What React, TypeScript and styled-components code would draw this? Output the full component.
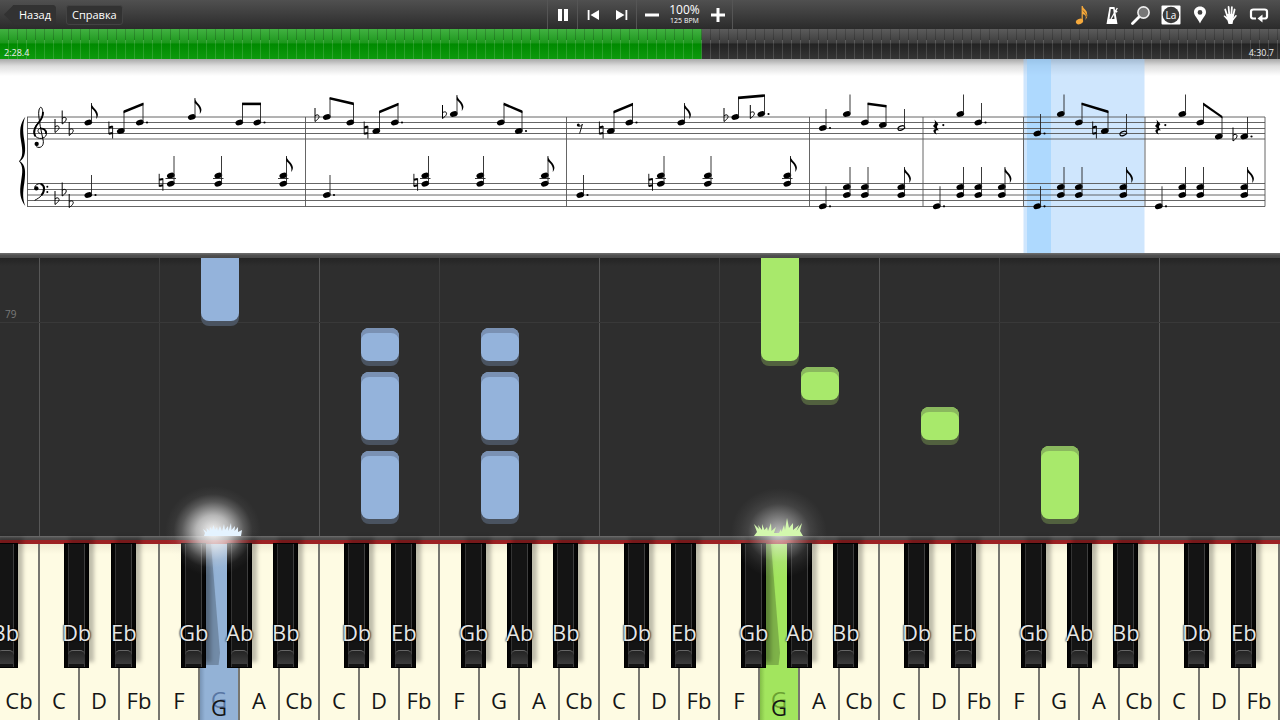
import React, { useState } from 'react';
import styled, { createGlobalStyle, css } from 'styled-components';

const GlobalStyle = createGlobalStyle`
  * { box-sizing: border-box; }
  body { margin: 0; background: #2e2e2e; font-family: 'Open Sans', 'Noto Sans', sans-serif; }
  button { font: inherit; color: inherit; padding: 0; border: 0; background: none; cursor: pointer; }
`;

const Page = styled.div`
  display: flex;
  flex-direction: column;
  min-height: 100vh;
  overflow: hidden;
`;

/* ---------- toolbar ---------- */

const Toolbar = styled.header`
  display: grid;
  grid-template-columns: 1fr auto 1fr;
  height: 29px;
  color: #fff;
  background: linear-gradient(#505050, #2b2b2b);
`;

const MenuGroup = styled.nav`
  display: flex;
  align-items: center;
  gap: 10px;
  padding: 0 4px;
`;

const MenuButton = styled.button<{ $back?: boolean }>`
  height: 20px;
  padding: 0 5px;
  font-size: 11px;
  font-weight: 500;
  line-height: 17px;
  border: 1px solid #434343;
  border-radius: 3px;
  background: #323232;
  ${(p) =>
    p.$back &&
    css`
      padding: 0 4px 0 14px;
      border-color: #323232;
      clip-path: polygon(0 50%, 10px 0, 100% 0, 100% 100%, 10px 100%);
    `}
`;

const Transport = styled.div`
  display: flex;
`;

const TransportSection = styled.div`
  display: flex;
  border-left: 1px solid #555;
  &:last-child { border-right: 1px solid #555; }
`;

const TransportButton = styled.button`
  display: grid;
  place-items: center;
  width: 29px;
  height: 29px;
`;

const Tempo = styled.output`
  display: flex;
  flex-direction: column;
  align-items: center;
  width: 37px;
  padding-top: 3px;
  font-size: 12px;
  line-height: 14px;
  white-space: nowrap;
  small { font-size: 7px; line-height: 8px; }
`;

const ToolGroup = styled.div`
  display: flex;
  justify-content: space-between;
  justify-self: end;
  width: 210px;
  padding-right: 9px;
`;

const ToolButton = styled.button`
  display: grid;
  place-items: center;
  width: 24px;
  height: 29px;
`;

/* ---------- song position ---------- */

const Position = styled.div`
  position: relative;
  height: 30px;
`;

const Seek = styled.input`
  appearance: none;
  display: block;
  width: 100%;
  height: 30px;
  margin: 0;
  background:
    repeating-linear-gradient(90deg, transparent 0 8px, #00000030 8px 9px) 0 0 / 100% 11px no-repeat,
    repeating-linear-gradient(90deg, transparent 0 8px, #ffffff24 8px 9px) 0 11px / 100% 19px no-repeat,
    linear-gradient(#42b142, #1d981d 46%, #008a00 50%, #0d9a0d) 0 0 / var(--played) 100% no-repeat,
    linear-gradient(#5c5c5c, #3d3d3d 46%, #232323 50%, #353535);
  &::-webkit-slider-thumb { appearance: none; width: 1px; height: 30px; }
`;

const Clock = styled.span<{ $end?: boolean }>`
  position: absolute;
  bottom: 0;
  ${(p) => (p.$end ? 'right: 6px;' : 'left: 4px;')}
  font-size: 9px;
  line-height: 13px;
  color: #eee;
  pointer-events: none;
`;

/* ---------- score ---------- */

const Sheet = styled.section`
  background: linear-gradient(#a8a8a8, #dedede 7px, #fff 17px);
  svg { display: block; width: 100%; height: auto; }
`;

const Rail = styled.div<{ $h: number }>`
  height: ${(p) => p.$h}px;
  background: linear-gradient(#707070, #4f4f4f 50%, #484848);
`;

const Staves = [117, 122.5, 128.5, 133.5, 139, 183.5, 189.5, 195, 200.5, 206.5];
const Bars = [27.5, 305.5, 566.5, 809.5, 923, 1023.5, 1145, 1265];

const Head = ({ x, y, open }: { x: number; y: number; open?: boolean }) => (
  <ellipse
    cx={x}
    cy={y}
    rx={open ? 3.5 : 4}
    ry={open ? 2 : 2.7}
    transform={`rotate(-20 ${x} ${y})`}
    fill={open ? 'none' : '#000'}
    stroke={open ? '#000' : 'none'}
    strokeWidth={1.1}
  />
);

type NoteProps = { x: number; ys: number[]; top: number; flag?: boolean; dot?: boolean; open?: boolean; ledger?: boolean };
const Note = ({ x, ys, top, flag, dot, open, ledger }: NoteProps) => (
  <g>
    {ys.map((y) => (
      <Head key={y} x={x + 0.3} y={y} open={open} />
    ))}
    <path d={`M${x + 3.5} ${ys[0] - 0.5}V${top}`} stroke="#222" strokeWidth={0.9} />
    {flag && (
      <path
        transform={`translate(${x + 3.2} ${top})`}
        d="M0 0C.8 4.600 6.600 7 6.700 11.500C6.700 13.200 6.200 14.600 5 16C6 12 4.200 8 0 5Z"
      />
    )}
    {dot && <circle cx={x + 7.5} cy={ys[0]} r={1.1} />}
    {ledger && <path d={`M${x - 5} 178.5h10.5`} stroke="#222" strokeWidth={0.9} />}
  </g>
);

const Beam = ({ x1, y1, x2, y2 }: { x1: number; y1: number; x2: number; y2: number }) => (
  <path d={`M${x1} ${y1}L${x2} ${y2}v2.6L${x1} ${y1 + 2.6}Z`} />
);

const Flat = ({ x, y }: { x: number; y: number }) => (
  <path
    transform={`translate(${x} ${y})`}
    d="M-2-9V4.5M-2-1C0-3.2 3-2 1.8.6C1.2 2 0 3-2 4.5"
    fill="none"
    stroke="#000"
    strokeWidth={1}
  />
);

const Natural = ({ x, y }: { x: number; y: number }) => (
  <g transform={`translate(${x} ${y})`} stroke="#000" fill="none">
    <path d="M-1.8-8.5V4.2M1.900-4V8.5" strokeWidth={0.9} />
    <path d="M-1.8-2.6L1.9-3.4M-1.8 3.8L1.9 3" strokeWidth={2} />
  </g>
);

const QuarterRest = ({ x }: { x: number }) => (
  <g transform={`translate(${x} 127.5)`}>
    <path d="M-1.6-8L2.400-3.2C.4-1 .6.2 3 3C-.2 2-1.2 4 .8 7C-3.8 4.600-3.2 1.4-.2 1.400L-3-1.600C-.6-3.600-.6-5.400-1.600-8Z" />
    <circle cx={7.3} cy={-2.4} r={1.1} />
  </g>
);

/* [x, head y, stem top, flag, dot] */
const trebleNotes: [number, number, number, boolean?, boolean?][] = [
  [88, 122.5, 103, true], [120.5, 131, 111], [139.5, 122.5, 103, false, true], [191.5, 117, 98, true],
  [239, 122.5, 103], [257, 122.5, 103, false, true],
  [326.5, 117, 98], [350, 122.5, 104], [376, 131, 111], [394.5, 122.5, 103, false, true],
  [453.5, 114, 95, true], [500.5, 122.5, 104], [518.5, 131, 111, false, true],
  [610.5, 131, 111], [629, 122.5, 103, false, true], [681, 122.5, 103, true], [735, 117, 97], [761, 114, 95, false, true],
  [822.5, 128, 109, false, true], [846.5, 114, 94.5], [864.5, 122.5, 103], [882.5, 125, 105],
  [960, 114, 94.5], [978, 122.5, 103, false, true],
  [1037, 133.5, 114, false, true], [1060.5, 114, 94.5], [1078.5, 122.5, 103], [1104.5, 131, 111],
  [1182, 114, 94.5], [1200, 122.5, 103], [1218.5, 136.5, 117], [1244, 136.5, 117, false, true],
];
const beams = [
  [123.6, 110.6, 143.4, 102.6], [242.1, 102.6, 261, 102.6], [329.6, 97, 353.9, 102.6], [379.1, 110.8, 398.4, 102.8],
  [503.6, 102.6, 522.4, 110.6], [613.6, 110.8, 633, 102.8], [738, 96.6, 764.9, 94.2], [867.6, 102.4, 886.4, 105],
  [1081.6, 102.4, 1108.4, 110.6], [1203.2, 102.6, 1222.4, 116],
];
const bassRoots = [[88, 195], [326.5, 195], [580, 195], [822.5, 206.3], [936.5, 206.3], [1037, 206.3], [1158.5, 206.3]];
const highChords: [number, boolean?][] = [
  [170.5], [218], [283, true], [425], [480], [544.5, true], [660.5], [707.5], [787, true],
];
const lowChords: [number, boolean?][] = [
  [846.5], [864.5], [901, true], [960], [978], [1001.5, true], [1060.5], [1078.5], [1123, true], [1182], [1200], [1244, true],
];
const flats = [
  [57, 128], [64.2, 119.5], [71.2, 131], [57, 200], [64.2, 191.5], [71.2, 203],
  [317, 117], [444.5, 114], [726, 117], [752.3, 114], [1235, 136.5],
];
const naturals = [
  [110.7, 130], [161, 182.3], [366, 130], [415.7, 182.3], [601.2, 130], [650.6, 182.3], [1094.5, 130],
];

const Score = () => (
  <svg viewBox="0 59 1280 194" role="img" aria-label="Ноты">
    <rect x={1023.5} y={59} width={121} height={194} fill="#9fcdfb" fillOpacity={0.5} />
    <rect x={1027} y={59} width={24} height={194} fill="#8ecbff" fillOpacity={0.5} />
    <g stroke="#555" strokeWidth={0.9}>
      {Staves.map((y) => (
        <path key={y} d={`M27 ${y}H1265`} />
      ))}
      {Bars.map((x) => (
        <path key={x} d={`M${x} 117V206.5`} />
      ))}
    </g>
    <g transform="translate(0 80) scale(.3333)">
      <path d="M76 110C60 130 58 152 63 182C68 212 70 230 57 244C70 258 68 276 63 306C58 336 60 358 76 378C68 358 68 338 73 308C78 272 76 256 60 244C76 232 78 214 73 182C68 150 68 130 76 110Z" />
      <g fill="none" stroke="#000" strokeWidth={3}>
        <path d="M121 161C111 157 112 146 122 145C135 144 142 153 139 164C135 178 113 179 105 167C97 153 106 138 115 128C126 116 131 106 128 92C126 80 120 78 117 90C114 102 118 118 121 140L130 184C131 200 120 206 109 200" />
        <path d="M106 169C98 156 106 139 115 129C123 120 129 110 129 96" strokeWidth={5.5} />
        <path d="M122 146C132 145 139 152 138 162" strokeWidth={5} />
        <path d="M104 361C120 353 133 342 133 325C131 306 108 308 104 322" />
        <path d="M122 312C136 316 134 335 124 346" strokeWidth={6} />
      </g>
      <circle cx={110} cy={192} r={6.5} />
      <circle cx={109} cy={325} r={6.5} />
      <circle cx={142} cy={320} r={3} />
      <circle cx={142} cy={336} r={3} />
    </g>
    {flats.map(([x, y]) => (
      <Flat key={`${x}-${y}`} x={x} y={y} />
    ))}
    {naturals.map(([x, y]) => (
      <Natural key={x} x={x} y={y} />
    ))}
    {trebleNotes.map(([x, y, top, flag, dot]) => (
      <Note key={x} x={x} ys={[y]} top={top} flag={flag} dot={dot} />
    ))}
    {beams.map(([x1, y1, x2, y2]) => (
      <Beam key={x1} x1={x1} y1={y1} x2={x2} y2={y2} />
    ))}
    <Note x={901} ys={[128]} top={109} open />
    <Note x={1123} ys={[133.5]} top={114} open />
    {bassRoots.map(([x, y]) => (
      <Note key={x} x={x} ys={[y]} top={y - 20} dot />
    ))}
    {highChords.map(([x, flag]) => (
      <Note key={x} x={x} ys={[183.7, 175.5]} top={156} flag={flag} ledger />
    ))}
    {lowChords.map(([x, flag]) => (
      <Note key={x} x={x} ys={[195, 187]} top={167} flag={flag} />
    ))}
    <QuarterRest x={936} />
    <QuarterRest x={1158} />
    <circle cx={578.3} cy={125} r={1.5} />
    <path d="M578.5 126.2C580.6 126.4 581.6 125.6 582.4 124.2L579.6 133.6" fill="none" stroke="#000" strokeWidth={0.9} />
  </svg>
);

/* ---------- falling notes ---------- */

const Roll = styled.main`
  position: relative;
  display: grid;
  grid-template-columns: 1fr 3fr 4fr 3fr 4fr 3fr 4fr 3fr 4fr 3fr;
  flex: 1 0 278px;
  overflow: hidden;
  background: linear-gradient(#242424, #2e2e2e 8px);
`;

const Lane = styled.div`
  border-right: 1px solid #3d3d3d;
  &:nth-child(odd) { border-right-color: #575757; }
  &:nth-child(10) { border-right: 0; }
`;

const MeasureLine = styled.div`
  position: absolute;
  top: 50px;
  left: 0;
  right: 0;
  height: 15px;
  padding-left: 5px;
  border-bottom: 1px solid #393939;
  font-size: 10px;
  line-height: 13px;
  color: #7a7a7a;
`;

const tones = {
  blue: { face: '#94b3db', cap: '#7a91b3', foot: '#4a5360', key: '#93b2d6', edge: '#7894b5', ghost: '#5876a3' },
  green: { face: '#a8e96b', cap: '#8ab85e', foot: '#52613f', key: '#a2e55e', edge: '#83bf48', ghost: '#6aa032' },
};
type Tone = keyof typeof tones;

const FallingNote = styled.div<{ $tone: Tone; $key: number; $top: number; $h: number }>`
  position: absolute;
  top: ${(p) => p.$top}px;
  left: calc(100% / 32 * ${(p) => p.$key} + 1px);
  width: calc(100% / 32 - 2px);
  height: ${(p) => p.$h}px;
  border-radius: 8px;
  background: ${(p) => tones[p.$tone].face};
  box-shadow: inset 0 5px 0 ${(p) => tones[p.$tone].cap}, 0 5px 0 ${(p) => tones[p.$tone].foot};
`;

const falling: { tone: Tone; key: number; top: number; h: number }[] = [
  { tone: 'blue', key: 5, top: -40, h: 103 },
  { tone: 'blue', key: 9, top: 70, h: 33 },
  { tone: 'blue', key: 9, top: 114, h: 68 },
  { tone: 'blue', key: 9, top: 193, h: 68 },
  { tone: 'blue', key: 12, top: 70, h: 33 },
  { tone: 'blue', key: 12, top: 114, h: 68 },
  { tone: 'blue', key: 12, top: 193, h: 68 },
  { tone: 'green', key: 19, top: -40, h: 143 },
  { tone: 'green', key: 20, top: 109, h: 33 },
  { tone: 'green', key: 23, top: 149, h: 33 },
  { tone: 'green', key: 26, top: 188, h: 73 },
];

/* ---------- keyboard ---------- */

const Felt = styled.div`
  height: 4px;
  background: #9c2123;
`;

const Keyboard = styled.section`
  display: grid;
  grid-template-columns: repeat(32, 1fr);
  height: 176px;
`;

const KeyCell = styled.div`
  position: relative;
  min-width: 0;
`;

const WhiteKey = styled.button<{ $tone?: Tone }>`
  display: flex;
  justify-content: center;
  align-items: flex-end;
  width: 100%;
  height: 100%;
  padding-bottom: 5px;
  font-size: 22px;
  font-weight: 500;
  line-height: 30px;
  color: #151515;
  border-right: 2px solid #77766f;
  background: linear-gradient(#f0ecd4, #fefbe3 10px);
  ${(p) =>
    p.$tone &&
    css`
      padding-bottom: 0;
      line-height: 26px;
      background: linear-gradient(90deg, ${tones[p.$tone].edge}, ${tones[p.$tone].key} 5px);
      text-shadow: 0 -8px 0 ${tones[p.$tone].ghost};
      &::before {
        content: '';
        position: absolute;
        top: 0;
        left: 6px;
        width: 14px;
        height: 121px;
        background: #00000038;
        clip-path: polygon(0 0, 5px 0, 100% 90%, 90% 100%, 0 100%);
      }
    `}
`;

const BlackKey = styled.button<{ $left: number }>`
  position: absolute;
  z-index: 2;
  top: -1px;
  left: ${(p) => p.$left}%;
  display: flex;
  flex-direction: column;
  justify-content: flex-end;
  align-items: center;
  width: 63%;
  height: 125px;
  padding: 0 3px 3px;
  font-size: 22px;
  font-weight: 500;
  line-height: 30px;
  color: #e6e6e6;
  text-shadow: 0 0 2px #000, 0 0 2px #000;
  border: 1px solid #000;
  background: linear-gradient(90deg, #050505 3px, #333 3px 4px, #141414 4px calc(100% - 4px), #3e3e3e calc(100% - 4px) calc(100% - 3px), #050505 calc(100% - 3px));
  box-shadow: 5px -6px 4px #00000040;
`;

const KeyLip = styled.span`
  width: 100%;
  height: 14px;
  margin-top: 3px;
  border-top: 1px solid #666;
  border-radius: 5px 5px 0 0;
  background: linear-gradient(#242424, #3c3c3c);
`;

const Glow = styled.div<{ $strong?: boolean }>`
  position: absolute;
  z-index: 3;
  top: ${(p) => (p.$strong ? -58 : -56)}px;
  left: ${(p) => (p.$strong ? -35 : -29)}px;
  width: 96px;
  height: 90px;
  pointer-events: none;
  background: radial-gradient(
    closest-side,
    rgba(255, 255, 255, ${(p) => (p.$strong ? 0.95 : 0.7)}),
    rgba(240, 240, 240, ${(p) => (p.$strong ? 0.7 : 0.4)}) 35%,
    rgba(220, 220, 220, ${(p) => (p.$strong ? 0.25 : 0.12)}) 65%,
    rgba(220, 220, 220, 0.05) 82%,
    transparent
  );
`;

const Sparks = styled.svg`
  position: absolute;
  z-index: 4;
  top: -28px;
  left: -8px;
  width: 52px;
  height: 20px;
  pointer-events: none;
`;

const octave: { name: string; black?: string; left?: number }[] = [
  { name: 'C', black: 'Db', left: 60 },
  { name: 'D', black: 'Eb', left: 78 },
  { name: 'Fb' },
  { name: 'F', black: 'Gb', left: 53 },
  { name: 'G', black: 'Ab', left: 68 },
  { name: 'A', black: 'Bb', left: 83 },
  { name: 'Cb' },
];
const keys = Array.from({ length: 32 }, (_, i) =>
  i === 0 ? { name: 'Cb', black: 'Bb', left: -18 } : octave[(i - 1) % 7],
);
const pressed: Record<number, Tone> = { 5: 'blue', 19: 'green' };

const sparkShapes: Record<Tone, { fill: string; d: string }> = {
  blue: {
    fill: '#e4f3ff',
    d: 'M12 20L13 17L11 13L15 16L14.500 12L17.500 15L18 11L20 14L21.500 9L23 14L25 11L26 15L28 10L30 15L32 8L33 14L36 10L36.500 15L39 7L39.500 14L43 10L42.500 15L46 11L46 16L50 14L49 20Z',
  },
  green: {
    fill: '#d3f8ae',
    d: 'M2 20L5 16L2 8L7 13L6 9L10 14L10 8L12.500 14L15 11L16 15L19 7L19.500 15L24 11L22 17L27 17L29 13L29.500 16L32 9L33 14L35 2L37 12L41 7L41 14L47 9L44.500 15L50 7L48 15L51 20Z',
  },
};

/* ---------- icons ---------- */

const PauseIcon = () => (
  <svg width="12" height="14" fill="#fff"><path d="M1 1h4v12H1zM7 1h4v12H7z" /></svg>
);
const SkipIcon = ({ next }: { next?: boolean }) => (
  <svg width="12" height="12" fill="#fff">
    <path d={next ? 'M0 1L8.5 6L0 11ZM9.5 1h1.8v10H9.5z' : 'M12 1L3.5 6L12 11ZM.7 1h1.8v10H.7z'} />
  </svg>
);
const SignIcon = ({ plus }: { plus?: boolean }) => (
  <svg width="14" height="14" fill="#fff">
    <path d={plus ? 'M0 5.5h5.5V0h3v5.5H14v3H8.5V14h-3V8.5H0z' : 'M0 5.5h14v3H0z'} />
  </svg>
);
const NoteIcon = () => (
  <svg width="14" height="20" fill="#f5a93c">
    <ellipse cx="4.500" cy="16.500" rx="3.700" ry="2.700" transform="rotate(-20 4.500 16.500)" />
    <path d="M6.600 17V1h1.200C8 4 12.300 5 12 8.500C13 11.500 11.500 13.500 10.300 15C11.600 11.500 10.500 10 7.800 9V17Z" />
    <path d="M8 5.500C9.500 8 12 8.500 11.300 12" fill="none" stroke="#7a5420" strokeWidth=".8" />
  </svg>
);
const MetronomeIcon = () => (
  <svg width="14" height="20">
    <path d="M4.500 2h5L12.500 19H1.500Z" fill="#fff" />
    <path d="M5.800 4h2.400l1.300 10H4.500Z" fill="#3c3c3c" />
    <path d="M6 14L12.300 3" stroke="#fff" strokeWidth="1.300" />
    <path d="M9.600 5.500l2.600 1.600" stroke="#fff" strokeWidth="1.800" />
  </svg>
);
const MagnifierIcon = () => (
  <svg width="20" height="20">
    <path d="M1.500 18.500L8.500 11.500" stroke="#fff" strokeWidth="2.800" strokeLinecap="round" />
    <circle cx="12.500" cy="7.500" r="5.600" fill="#777" stroke="#eee" strokeWidth="1.600" />
  </svg>
);
const LabelIcon = () => (
  <svg width="20" height="20">
    <rect x=".5" y=".5" width="19" height="19" rx="1" fill="#fff" />
    <circle cx="10" cy="10" r="8.300" fill="#3a3a3a" />
    <text x="10" y="13.500" fontSize="10" fill="#fff" textAnchor="middle">La</text>
  </svg>
);
const PinIcon = () => (
  <svg width="14" height="18">
    <path fillRule="evenodd" fill="#fff" d="M7 .5C10.7.5 13 3 13 6.300C13 9.500 9 13 7 17.500C5 13 1 9.500 1 6.300C1 3 3.300.5 7 .5ZM7 4a2.400 2.400 0 1 0 0 4.800a2.400 2.400 0 1 0 0-4.800Z" />
  </svg>
);
const HandIcon = () => (
  <svg width="16" height="20" fill="none" stroke="#fff" strokeLinecap="round">
    <path d="M5.300 11L3.200 4.500M7.300 10L6.600 2M9.300 10L9.900 2.200M11 11L12.600 4.500" strokeWidth="1.800" />
    <path d="M4.500 9L11.900 9L11.500 14L10.500 19H6.500L5.500 15.500L1.500 11C2 10 3.200 10.500 4.800 12Z" fill="#fff" stroke="none" />
    <path d="M11 14.500L14 10.800" strokeWidth="1.600" />
  </svg>
);
const LoopIcon = () => (
  <svg width="20" height="16" fill="none" stroke="#fff" strokeWidth="2.200">
    <path d="M7 11.500H4.500C3 11.500 2 11 2 9.500V4.500C2 3 3 2.500 4.500 2.500H15.500C17 2.500 18 3 18 4.500V9.500C18 11 17 11.500 15.500 11.500H13" />
    <path d="M13.500 7.500V15.500L8.500 11.500Z" fill="#fff" stroke="none" />
  </svg>
);

const tools = [
  { label: 'Ноты', icon: <NoteIcon /> },
  { label: 'Метроном', icon: <MetronomeIcon /> },
  { label: 'Масштаб', icon: <MagnifierIcon /> },
  { label: 'Названия нот', icon: <LabelIcon /> },
  { label: 'Закладка', icon: <PinIcon /> },
  { label: 'Руки', icon: <HandIcon /> },
  { label: 'Повтор', icon: <LoopIcon /> },
];

const DURATION = 270.7;

export default function App() {
  const [time, setTime] = useState(148.4);
  return (
    <Page>
      <GlobalStyle />
      <Toolbar>
        <MenuGroup>
          <MenuButton $back>Назад</MenuButton>
          <MenuButton>Справка</MenuButton>
        </MenuGroup>
        <Transport>
          <TransportSection>
            <TransportButton aria-label="Пауза"><PauseIcon /></TransportButton>
          </TransportSection>
          <TransportSection>
            <TransportButton aria-label="В начало"><SkipIcon /></TransportButton>
            <TransportButton aria-label="Вперёд"><SkipIcon next /></TransportButton>
          </TransportSection>
          <TransportSection>
            <TransportButton aria-label="Медленнее"><SignIcon /></TransportButton>
            <Tempo>100%<small>125 BPM</small></Tempo>
            <TransportButton aria-label="Быстрее"><SignIcon plus /></TransportButton>
          </TransportSection>
        </Transport>
        <ToolGroup>
          {tools.map((t) => (
            <ToolButton key={t.label} aria-label={t.label}>{t.icon}</ToolButton>
          ))}
        </ToolGroup>
      </Toolbar>

      <Position>
        <Seek
          type="range"
          aria-label="Позиция"
          min={0}
          max={DURATION}
          step={0.1}
          value={time}
          onChange={(e) => setTime(Number(e.target.value))}
          style={{ '--played': `${(time / DURATION) * 100}%` } as React.CSSProperties}
        />
        <Clock>{`${Math.floor(time / 60)}:${(time % 60).toFixed(1).padStart(4, '0')}`}</Clock>
        <Clock $end>4:30.7</Clock>
      </Position>

      <Sheet><Score /></Sheet>
      <Rail $h={5} />

      <Roll>
        {Array.from({ length: 10 }, (_, i) => (
          <Lane key={i} />
        ))}
        <MeasureLine>79</MeasureLine>
        {falling.map((n) => (
          <FallingNote key={`${n.key}-${n.top}`} $tone={n.tone} $key={n.key} $top={n.top} $h={n.h} />
        ))}
      </Roll>

      <Rail $h={4} />
      <Felt />
      <Keyboard aria-label="Клавиатура">
        {keys.map((k, i) => (
          <KeyCell key={i}>
            <WhiteKey $tone={pressed[i]}>{k.name}</WhiteKey>
            {k.black && (
              <BlackKey $left={k.left ?? 0}>
                {k.black}
                <KeyLip />
              </BlackKey>
            )}
            {pressed[i] && (
              <>
                <Glow $strong={pressed[i] === 'blue'} />
                <Sparks viewBox="0 0 52 20" aria-hidden="true">
                  <path d={sparkShapes[pressed[i]].d} fill={sparkShapes[pressed[i]].fill} />
                </Sparks>
              </>
            )}
          </KeyCell>
        ))}
      </Keyboard>
    </Page>
  );
}
